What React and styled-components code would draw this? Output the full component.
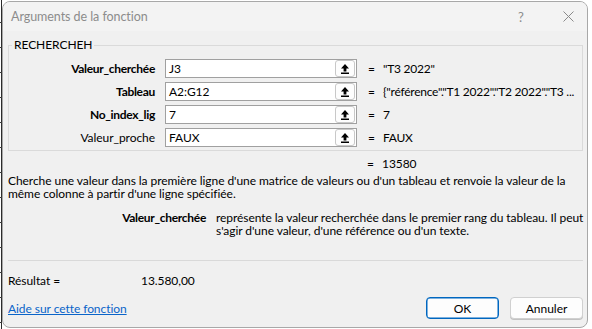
import React from 'react'
import styled, { createGlobalStyle } from 'styled-components'

const GlobalStyle = createGlobalStyle`
  body {
    margin: 0;
    background: #ffffff;
    font-family: Lato, "Liberation Sans", sans-serif;
    font-size: 12px;
    letter-spacing: -0.06px;
    color: #000;
  }
`

const args = [
  { name: 'Valeur_cherchée', value: 'J3', result: '"T3 2022"', bold: true },
  { name: 'Tableau', value: 'A2:G12', result: '{"référence"."T1 2022"."T2 2022"."T3 ...', bold: true },
  { name: 'No_index_lig', value: '7', result: '7', bold: true },
  { name: 'Valeur_proche', value: 'FAUX', result: 'FAUX', bold: false },
]

function RefIcon() {
  return (
    <svg width="8" height="10" viewBox="0 0 8 10">
      <path d="M4 0 L0 4.5 L2.6 4.5 L2.6 7.5 L5.4 7.5 L5.4 4.5 L8 4.5 Z" fill="#000" />
      <rect x="0" y="8.5" width="8" height="1.5" fill="#000" />
    </svg>
  )
}

function CloseIcon() {
  return (
    <svg width="11" height="11" viewBox="0 0 11 11">
      <path d="M0.5 0.5 L10.5 10.5 M10.5 0.5 L0.5 10.5" stroke="#8a8a8a" strokeWidth="1" />
    </svg>
  )
}

export default function App() {
  return (
    <Page>
      <GlobalStyle />
      <SheetEdge />
      <Window>
        <TitleBar>
          <Title>Arguments de la fonction</Title>
          <TitleButtons>
            <TitleButton>?</TitleButton>
            <TitleButton><CloseIcon /></TitleButton>
          </TitleButtons>
        </TitleBar>

        <Body>
          <Group>
            <Legend>RECHERCHEH</Legend>
            <ArgGrid>
              {args.map(a => (
                <React.Fragment key={a.name}>
                  <ArgLabel $bold={a.bold}>{a.name}</ArgLabel>
                  <InputBox>
                    <InputText>{a.value}</InputText>
                    <RefButton><RefIcon /></RefButton>
                  </InputBox>
                  <Equals>=</Equals>
                  <ArgResult>{a.result}</ArgResult>
                </React.Fragment>
              ))}
            </ArgGrid>
          </Group>

          <FormulaResult>
            <Equals>=</Equals>
            <span>13580</span>
          </FormulaResult>

          <Description>
            Cherche une valeur dans la première ligne d'une matrice de valeurs ou d'un tableau et renvoie la valeur de la même colonne à partir d'une ligne spécifiée.
          </Description>

          <ArgHelp>
            <ArgHelpName>Valeur_cherchée</ArgHelpName>
            <ArgHelpText>
              représente la valeur recherchée dans le premier rang du tableau. Il peut s'agir d'une valeur, d'une référence ou d'un texte.
            </ArgHelpText>
          </ArgHelp>

          <Separator />

          <ResultRow>
            <ResultLabel>Résultat =</ResultLabel>
            <span>13.580,00</span>
          </ResultRow>

          <Footer>
            <HelpLink href="#">Aide sur cette fonction</HelpLink>
            <Buttons>
              <DialogButton $primary>OK</DialogButton>
              <DialogButton>Annuler</DialogButton>
            </Buttons>
          </Footer>
        </Body>
      </Window>
    </Page>
  )
}

const Page = styled.div`
  display: flex;
  align-items: flex-start;
  height: 329px;
  width: 592px;
  overflow: hidden;
`

const SheetEdge = styled.div`
  width: 2px;
  height: 329px;
  background-image:
    repeating-linear-gradient(to bottom, transparent 0 22px, #3a3a3a 22px 23px, transparent 23px 25px),
    linear-gradient(to right, #fff 1px, #2b2b2b 1px);
`

const Window = styled.div`
  margin-top: 1px;
  width: 586px;
  height: 327px;
  box-sizing: border-box;
  border: 1px solid #a8a8a8;
  border-radius: 8px;
  background: #f0f0f0;
  display: flex;
  flex-direction: column;
  overflow: hidden;
`

const TitleBar = styled.div`
  height: 29px;
  flex: none;
  display: flex;
  align-items: center;
  justify-content: space-between;
  padding-left: 8px;
  background: #f3f3f3;
`

const Title = styled.div`
  color: #8c8c8c;
  font-size: 12.5px;
`

const TitleButtons = styled.div`
  display: flex;
  gap: 27px;
  padding-right: 9px;
`

const TitleButton = styled.div`
  width: 20px;
  height: 20px;
  display: flex;
  align-items: center;
  justify-content: center;
  color: #8c8c8c;
  font-size: 13px;
`

const Body = styled.div`
  flex: 1;
  display: flex;
  flex-direction: column;
  padding: 0 4px 7px 5px;
`

const Group = styled.fieldset`
  margin: 7px 0 0;
  padding: 7px 0 3px;
  border: 1px solid #dadada;
`

const Legend = styled.legend`
  margin-left: 3px;
  padding: 0 2px;
  line-height: 14px;
`

const ArgGrid = styled.div`
  display: grid;
  grid-template-columns: 146px 192px 6px 1fr;
  column-gap: 10px;
  row-gap: 4px;
  align-items: center;
`

const ArgLabel = styled.div`
  text-align: right;
  font-weight: ${p => (p.$bold ? 700 : 400)};
  letter-spacing: ${p => (p.$bold ? '-0.3px' : '-0.06px')};
`

const InputBox = styled.div`
  height: 19px;
  box-sizing: border-box;
  border: 1px solid #a0a0a0;
  background: #fff;
  display: flex;
  align-items: center;
  padding: 0 1px 0 3px;
`

const InputText = styled.span`
  flex: 1;
`

const RefButton = styled.div`
  width: 20px;
  height: 17px;
  box-sizing: border-box;
  border: 1px solid #c8c8c8;
  border-radius: 3px;
  background: #fdfdfd;
  display: flex;
  align-items: center;
  justify-content: center;
`

const Equals = styled.span`
  display: inline-block;
  width: 6px;
  padding-left: 1px;
`

const ArgResult = styled.div`
  white-space: nowrap;
  overflow: hidden;
  letter-spacing: -0.25px;
`

const FormulaResult = styled.div`
  margin-top: 6px;
  padding-left: 358px;
  line-height: 14px;
  display: flex;
  gap: 0;

  ${Equals} {
    width: 15px;
  }
`

const Description = styled.p`
  margin: 3px 0 0;
  line-height: 13px;
`

const ArgHelp = styled.div`
  margin-top: 11px;
  margin-right: -4px;
  display: grid;
  grid-template-columns: 198px 1fr;
  column-gap: 10px;
  line-height: 13px;
`

const ArgHelpName = styled.div`
  text-align: right;
  font-weight: 700;
  letter-spacing: -0.3px;
`

const ArgHelpText = styled.div``

const Separator = styled.div`
  margin-top: 23px;
  height: 1px;
  background: #d9d9d9;
`

const ResultRow = styled.div`
  margin-top: 13px;
  line-height: 14px;
  display: flex;
`

const ResultLabel = styled.span`
  width: 133px;
`

const Footer = styled.div`
  margin-top: 9px;
  display: flex;
  align-items: center;
  justify-content: space-between;
`

const HelpLink = styled.a`
  color: #0a64c9;
  text-decoration: underline;
`

const Buttons = styled.div`
  display: flex;
  gap: 11px;
`

const DialogButton = styled.button`
  width: 73px;
  height: 22px;
  box-sizing: border-box;
  border-radius: 4px;
  font-family: inherit;
  font-size: 12px;
  color: #000;
  background: #fdfdfd;
  border: 1px solid ${p => (p.$primary ? '#0067c0' : '#d0d0d0')};
  box-shadow: ${p => (p.$primary ? 'inset 0 0 0 0.5px #0067c0' : '0 1px 0 #c2c2c2')};
`
